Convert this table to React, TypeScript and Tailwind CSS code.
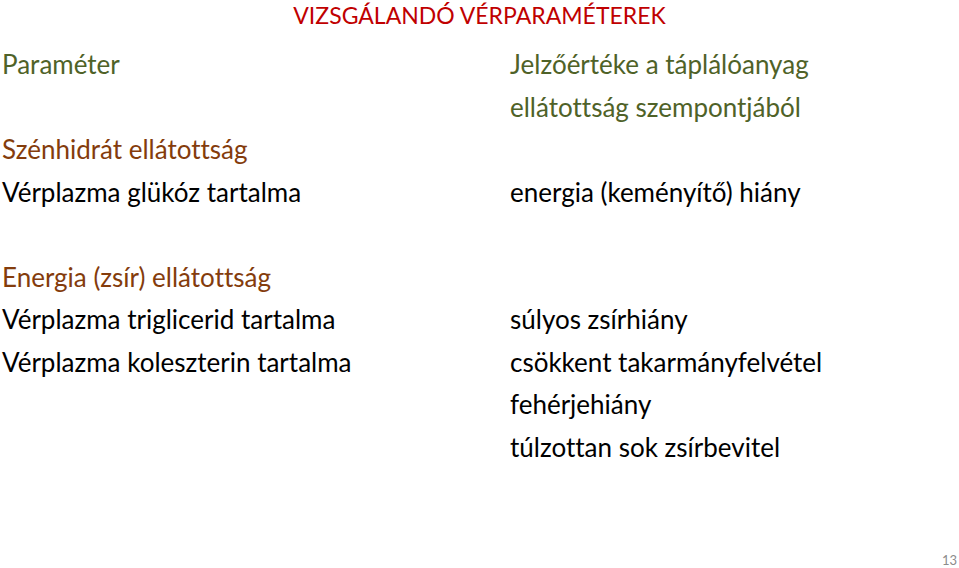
export default function App() {
  const font = { fontFamily: 'Lato, "Open Sans", sans-serif' };
  const left: { text: string; color: string }[] = [
    { text: 'Paraméter', color: 'text-[#4f6228]' },
    { text: '', color: '' },
    { text: 'Szénhidrát ellátottság', color: 'text-[#843c0c]' },
    { text: 'Vérplazma glükóz tartalma', color: 'text-black' },
    { text: '', color: '' },
    { text: 'Energia (zsír) ellátottság', color: 'text-[#843c0c]' },
    { text: 'Vérplazma triglicerid tartalma', color: 'text-black' },
    { text: 'Vérplazma koleszterin tartalma', color: 'text-black' },
  ];
  const right: { text: string; color: string }[] = [
    { text: 'Jelzőértéke a táplálóanyag', color: 'text-[#4f6228]' },
    { text: 'ellátottság szempontjából', color: 'text-[#4f6228]' },
    { text: '', color: '' },
    { text: 'energia (keményítő) hiány', color: 'text-black' },
    { text: '', color: '' },
    { text: '', color: '' },
    { text: 'súlyos zsírhiány', color: 'text-black' },
    { text: 'csökkent takarmányfelvétel', color: 'text-black' },
    { text: 'fehérjehiány', color: 'text-black' },
    { text: 'túlzottan sok zsírbevitel', color: 'text-black' },
  ];

  return (
    <div className="flex h-[568px] w-[959px] flex-col bg-white [font-variant-ligatures:none]" style={font}>
      {/* Title */}
      <div className="flex h-[43px] justify-center pt-[1px]">
        <h1 className="text-[23px] leading-[28px] text-[#c00000]">VIZSGÁLANDÓ VÉRPARAMÉTEREK</h1>
      </div>

      {/* Two columns */}
      <div className="flex text-[26px] leading-[42.5px]">
        <div className="w-[510px] pl-[2px]">
          {left.map((l, i) => (
            <div key={i} className={`h-[42.5px] whitespace-nowrap ${l.color}`}>
              {l.text}
            </div>
          ))}
        </div>
        <div className="flex-1">
          {right.map((r, i) => (
            <div key={i} className={`h-[42.5px] whitespace-nowrap ${r.color}`}>
              {r.text}
            </div>
          ))}
        </div>
      </div>

      {/* Page number */}
      <div className="mt-auto flex justify-end pb-[1px] pr-[2px]">
        <span className="text-[13px] leading-[14px] text-[#8c8c8c]">13</span>
      </div>
    </div>
  );
}
